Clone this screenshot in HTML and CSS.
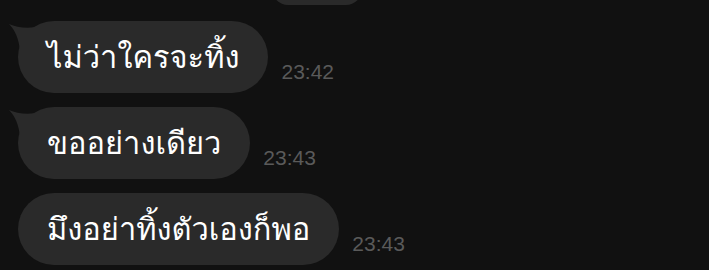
FILE: index.html
```html
<!DOCTYPE html>
<html lang="th">
<head>
<meta charset="utf-8">
<link rel="stylesheet" href="styles.css">
</head>
<body>
<div class="chat">
  <div class="stub"></div>
  <div class="row first">
    <div class="bubble">
      <svg class="tail" width="28" height="32" viewBox="0 0 28 32"><path d="M1,3 C8,6 18,8 27,6 L27,30 L12,30 C11,18 7,9 1,3 Z"/></svg>
      <span>ไม่ว่าใครจะทิ้ง</span>
    </div>
    <div class="time">23:42</div>
  </div>
  <div class="row">
    <div class="bubble">
      <svg class="tail" width="28" height="32" viewBox="0 0 28 32"><path d="M1,3 C8,6 18,8 27,6 L27,30 L12,30 C11,18 7,9 1,3 Z"/></svg>
      <span>ขออย่างเดียว</span>
    </div>
    <div class="time">23:43</div>
  </div>
  <div class="row">
    <div class="bubble">
      <span>มึงอย่าทิ้งตัวเองก็พอ</span>
    </div>
    <div class="time">23:43</div>
  </div>
</div>
</body>
</html>
```
FILE: styles.css
```css
html, body {
  margin: 0;
  padding: 0;
  background: #111111;
  height: 100%;
  overflow: hidden;
}
.chat {
  padding-left: 18px;
  display: flex;
  flex-direction: column;
  gap: 14px;
}
.stub {
  width: 90px;
  height: 72px;
  margin-top: -67px;
  margin-left: 254px;
  border-radius: 16px;
  background: #2a2a2a;
}
.row {
  display: flex;
  align-items: flex-end;
  gap: 13px;
}
.row.first {
  margin-top: 2px;
}
.bubble {
  position: relative;
  height: 72px;
  box-sizing: border-box;
  padding: 0 29px;
  border-radius: 36px;
  background: #2a2a2a;
  color: #ffffff;
  display: flex;
  align-items: center;
  font-family: "Waree", "Loma", "Garuda", "Noto Sans Thai", "Noto Sans", sans-serif;
  font-size: 30.8px;
  white-space: nowrap;
}
.bubble span {
  position: relative;
}
.tail {
  position: absolute;
  left: -10px;
  top: 0;
  fill: #2a2a2a;
}
.time {
  font-family: "Liberation Sans", Arial, sans-serif;
  font-size: 21px;
  color: #5a5a5a;
  margin-bottom: 11px;
  line-height: 1;
}
```
